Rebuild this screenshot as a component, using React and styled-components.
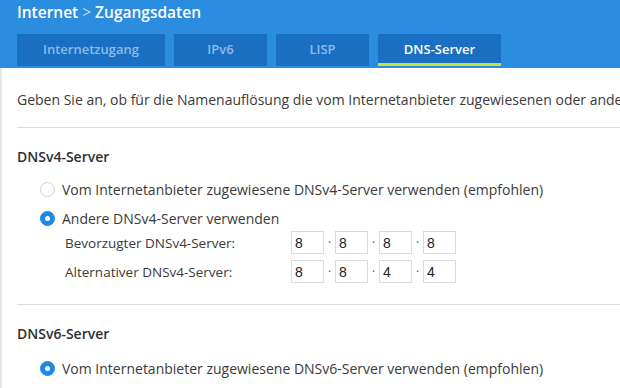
import React from "react";
import styled, { createGlobalStyle } from "styled-components";

const Global = createGlobalStyle`
  html, body { margin: 0; padding: 0; background: #fff; overflow: hidden; }
  body { font-family: "Open Sans", Lato, sans-serif; color: #333; }
  * { box-sizing: border-box; }
`;

const Page = styled.div`
  width: 620px;
  height: 388px;
  display: flex;
  flex-direction: column;
  overflow: hidden;
`;

const Header = styled.header`
  background: #2b8de0;
  padding: 0 0 0 17px;
  height: 68px;
  display: flex;
  flex-direction: column;
`;

const Title = styled.h1`
  margin: 0;
  color: #fff;
  font-size: 15.5px;
  font-weight: 600;
  line-height: 24px;
  display: flex;
  align-items: center;
  gap: 4px;
`;

const Chevron = styled.span`
  font-weight: 300;
`;

const Tabs = styled.nav`
  display: flex;
  gap: 9px;
  margin-top: 10px;
`;

const Tab = styled.div`
  width: ${(p) => p.$w}px;
  height: 32px;
  background: #1b6fc3;
  color: ${(p) => (p.$active ? "#fff" : "#8abce8")};
  font-size: 13px;
  font-weight: 600;
  display: flex;
  align-items: center;
  justify-content: center;
  border-bottom: 3px solid ${(p) => (p.$active ? "#c6e23c" : "transparent")};
  padding-top: 1px;
`;

const Content = styled.main`
  flex: 1;
  border-left: 2px solid #e7e7e7;
  padding: 0 0 0 15px;
`;

const Intro = styled.p`
  margin: 0;
  padding: 22px 0 0;
  height: 59px;
  font-size: 14px;
  line-height: 20px;
  white-space: nowrap;
  overflow: hidden;
  color: #3a3a3a;
`;

const Divider = styled.hr`
  margin: 0;
  border: none;
  border-top: 1px solid #dcdcdc;
`;

const Section = styled.section`
  display: flex;
  flex-direction: column;
  padding-top: ${(p) => p.$top}px;
`;

const Heading = styled.h2`
  margin: 0 0 ${(p) => p.$gap}px;
  font-size: 14px;
  font-weight: 600;
  line-height: 20px;
  color: #2f2f2f;
`;

const Option = styled.label`
  display: flex;
  align-items: center;
  gap: 7px;
  margin-left: 23px;
  height: 29px;
  font-size: 14px;
  color: #3a3a3a;
  white-space: nowrap;
`;

const Radio = styled.span`
  width: 15px;
  height: 15px;
  border-radius: 50%;
  flex: none;
  background: ${(p) => (p.$on ? "#1e88e5" : "#fff")};
  border: 1px solid ${(p) => (p.$on ? "#1e88e5" : "#cfcfcf")};
  display: flex;
  align-items: center;
  justify-content: center;
  &::after {
    content: "";
    width: 5px;
    height: 5px;
    border-radius: 50%;
    background: #fff;
    display: ${(p) => (p.$on ? "block" : "none")};
  }
`;

const Fields = styled.div`
  display: flex;
  flex-direction: column;
  gap: 6px;
  margin: -2px 0 0 47px;
  padding-bottom: 21px;
`;

const FieldRow = styled.div`
  display: flex;
  align-items: center;
  height: 23px;
`;

const FieldLabel = styled.span`
  width: 227px;
  font-size: 13.5px;
  color: #3a3a3a;
  padding-left: 1px;
`;

const Octet = styled.span`
  width: 33px;
  height: 23px;
  border: 1px solid #dadada;
  font-family: "Liberation Sans", Arial, sans-serif;
  font-size: 14px;
  color: #222;
  padding: 0 0 0 3px;
  display: flex;
  align-items: center;
`;

const Dot = styled.span`
  width: 11px;
  text-align: center;
  font-size: 12px;
  color: #555;
  line-height: 23px;
`;

const Ip = ({ parts }) => (
  <>
    {parts.map((p, i) => (
      <React.Fragment key={i}>
        {i > 0 && <Dot>·</Dot>}
        <Octet>{p}</Octet>
      </React.Fragment>
    ))}
  </>
);

export default function App() {
  return (
    <Page>
      <Global />
      <Header>
        <Title>
          Internet <Chevron>&gt;</Chevron> Zugangsdaten
        </Title>
        <Tabs>
          <Tab $w={148}>Internetzugang</Tab>
          <Tab $w={93}>IPv6</Tab>
          <Tab $w={93}>LISP</Tab>
          <Tab $w={123} $active>DNS-Server</Tab>
        </Tabs>
      </Header>
      <Content>
        <Intro>
          Geben Sie an, ob für die Namenauflösung die vom Internetanbieter zugewiesenen oder andere DNS-Server verwendet werden sollen.
        </Intro>
        <Divider />
        <Section $top={19}>
          <Heading $gap={8}>DNSv4-Server</Heading>
          <Option>
            <Radio />
            Vom Internetanbieter zugewiesene DNSv4-Server verwenden (empfohlen)
          </Option>
          <Option>
            <Radio $on />
            Andere DNSv4-Server verwenden
          </Option>
          <Fields>
            <FieldRow>
              <FieldLabel>Bevorzugter DNSv4-Server:</FieldLabel>
              <Ip parts={["8", "8", "8", "8"]} />
            </FieldRow>
            <FieldRow>
              <FieldLabel>Alternativer DNSv4-Server:</FieldLabel>
              <Ip parts={["8", "8", "4", "4"]} />
            </FieldRow>
          </Fields>
        </Section>
        <Divider />
        <Section $top={19}>
          <Heading $gap={10}>DNSv6-Server</Heading>
          <Option>
            <Radio $on />
            Vom Internetanbieter zugewiesene DNSv6-Server verwenden (empfohlen)
          </Option>
        </Section>
      </Content>
    </Page>
  );
}
